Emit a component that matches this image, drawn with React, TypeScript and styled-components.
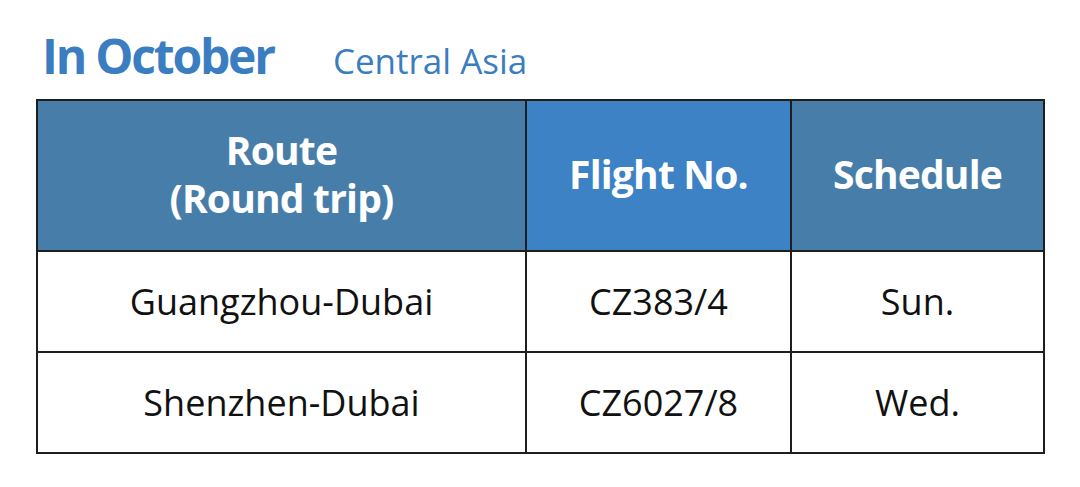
import React from 'react';
import styled, { createGlobalStyle } from 'styled-components';

const GlobalStyle = createGlobalStyle`
  html, body {
    margin: 0;
    padding: 0;
    background: #ffffff;
  }
  body {
    font-family: "Open Sans", "Noto Sans", sans-serif;
  }
`;

const Page = styled.div`
  width: 1080px;
  height: 487px;
  box-sizing: border-box;
  padding: 24px 0 0 36px;
`;

const Heading = styled.div`
  display: flex;
  align-items: baseline;
  gap: 59px;
  padding-left: 6px;
  height: 75px;
  color: #3a7dc1;
`;

const Title = styled.h1`
  margin: 0;
  font-size: 48px;
  font-weight: 700;
  letter-spacing: -2.2px;
  line-height: 64px;
`;

const Subtitle = styled.span`
  font-size: 35px;
  font-weight: 400;
  line-height: 64px;
`;

const Table = styled.table`
  width: 1008px;
  border-collapse: collapse;
  table-layout: fixed;
`;

const Col = styled.col<{ $w: number }>`
  width: ${p => p.$w}px;
`;

const HeadCell = styled.th<{ $accent?: boolean }>`
  height: 146px;
  padding: 0 0 3px;
  border: 2px solid #1e1e1e;
  background: ${p => (p.$accent ? '#3c82c4' : '#477ea9')};
  color: #ffffff;
  font-size: 39px;
  font-weight: 700;
  line-height: 48px;
  letter-spacing: -0.8px;
  text-align: center;
  vertical-align: middle;
`;

const Cell = styled.td`
  height: 99px;
  padding: 0;
  border: 2px solid #1e1e1e;
  color: #111111;
  font-size: 36px;
  font-weight: 400;
  text-align: center;
  vertical-align: middle;
`;

const rows = [
  { route: 'Guangzhou-Dubai', flight: 'CZ383/4', day: 'Sun.' },
  { route: 'Shenzhen-Dubai', flight: 'CZ6027/8', day: 'Wed.' },
];

const App: React.FC = () => {
  return (
    <Page>
      <GlobalStyle />
      <Heading>
        <Title>In October</Title>
        <Subtitle>Central Asia</Subtitle>
      </Heading>
      <Table>
        <colgroup>
          <Col $w={489} />
          <Col $w={265} />
          <Col $w={253} />
        </colgroup>
        <thead>
          <tr>
            <HeadCell>
              Route
              <br />
              (Round trip)
            </HeadCell>
            <HeadCell $accent>Flight No.</HeadCell>
            <HeadCell>Schedule</HeadCell>
          </tr>
        </thead>
        <tbody>
          {rows.map(r => (
            <tr key={r.flight}>
              <Cell>{r.route}</Cell>
              <Cell>{r.flight}</Cell>
              <Cell>{r.day}</Cell>
            </tr>
          ))}
        </tbody>
      </Table>
    </Page>
  );
};

export default App;
